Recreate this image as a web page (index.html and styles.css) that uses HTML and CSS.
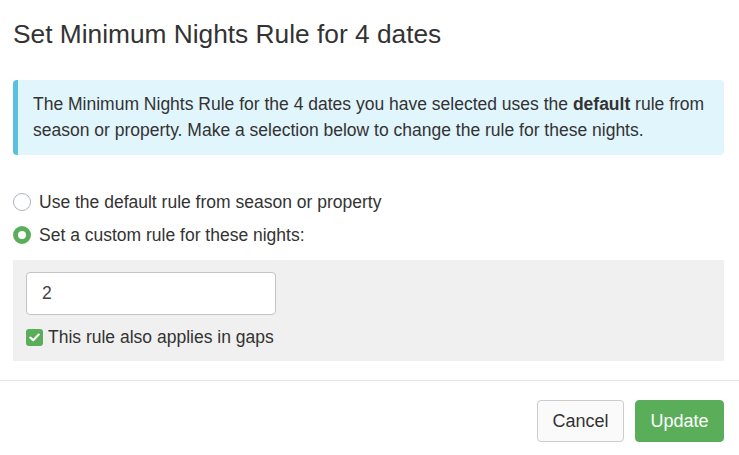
FILE: index.html
```html
<!DOCTYPE html>
<html lang="en">
<head>
<meta charset="utf-8">
<title>Set Minimum Nights Rule</title>
<link rel="stylesheet" href="styles.css">
</head>
<body>
<div class="modal">
  <div class="modal-header">
    <h4 class="modal-title">Set Minimum Nights Rule for 4 dates</h4>
  </div>
  <div class="modal-body">
    <div class="alert">
      The Minimum Nights Rule for the 4 dates you have selected uses the <b>default</b> rule from season or property. Make a selection below to change the rule for these nights.
    </div>
    <div class="options">
      <label class="radio-row">
        <span class="radio"></span>
        <span>Use the default rule from season or property</span>
      </label>
      <label class="radio-row">
        <span class="radio checked"></span>
        <span>Set a custom rule for these nights:</span>
      </label>
    </div>
    <div class="custom-box">
      <div class="input">2</div>
      <label class="check-row">
        <span class="checkbox">
          <svg width="11" height="9" viewBox="0 0 11 9"><path d="M1.3 4.6 L4.2 7.3 L9.7 1.6" fill="none" stroke="#fff" stroke-width="2.1" stroke-linecap="round" stroke-linejoin="round"/></svg>
        </span>
        <span>This rule also applies in gaps</span>
      </label>
    </div>
  </div>
  <div class="modal-footer">
    <button class="btn btn-default">Cancel</button>
    <button class="btn btn-success">Update</button>
  </div>
</div>
</body>
</html>
```

FILE: styles.css
```css
html, body {
  margin: 0;
  padding: 0;
  background: #fff;
}
body {
  font-family: "Liberation Sans", Arial, sans-serif;
  font-size: 17.5px;
  color: #333;
}
.modal {
  width: 739px;
  height: 455px;
  overflow: hidden;
}
.modal-header {
  padding: 19px 15px 0 13px;
  height: 80px;
  box-sizing: border-box;
}
.modal-title {
  margin: 0;
  font-size: 26.3px;
  font-weight: normal;
  line-height: 30px;
  color: #333;
}
.modal-body {
  padding: 0 15px 0 13px;
}
.alert {
  background: #e1f5fd;
  border-left: 5px solid #5bc0de;
  border-radius: 4px;
  padding: 12px 15px;
  line-height: 25.6px;
  height: 75px;
  box-sizing: border-box;
}
.alert b {
  font-weight: bold;
}
.options {
  padding-top: 37px;
  display: flex;
  flex-direction: column;
  gap: 13px;
}
.radio-row {
  display: flex;
  align-items: center;
  gap: 8px;
  height: 20px;
  line-height: 20px;
}
.radio {
  width: 18px;
  height: 18px;
  box-sizing: border-box;
  border: 1px solid #adb5bd;
  border-radius: 50%;
  background: #fff;
  flex: none;
}
.radio.checked {
  border: 5.5px solid #5aae5a;
}
.custom-box {
  margin-top: 15px;
  background: #f0f0f0;
  padding: 12px 13px 15px 13px;
  height: 101px;
  box-sizing: border-box;
}
.input {
  width: 250px;
  height: 43px;
  box-sizing: border-box;
  border: 1px solid #c4c4c4;
  border-radius: 4px;
  background: #fff;
  padding: 0 15px;
  line-height: 41px;
  font-size: 17.5px;
  color: #444;
}
.check-row {
  display: flex;
  align-items: center;
  gap: 5px;
  margin-top: 14px;
  height: 17px;
  line-height: 17px;
}
.checkbox {
  width: 17px;
  height: 17px;
  border-radius: 3px;
  background: #5aae5a;
  display: flex;
  align-items: center;
  justify-content: center;
  flex: none;
}
.modal-footer {
  margin-top: 19px;
  border-top: 1px solid #e5e5e5;
  padding: 19px 15px 0 15px;
  display: flex;
  justify-content: flex-end;
  gap: 11px;
}
.btn {
  font-family: "Liberation Sans", Arial, sans-serif;
  font-size: 18px;
  height: 42px;
  box-sizing: border-box;
  padding: 0 14.5px;
  border-radius: 4px;
  line-height: 40px;
  cursor: pointer;
}
.btn-default {
  background: #fafafa;
  border: 1px solid #ccc;
  color: #333;
}
.btn-success {
  background: #5aae5a;
  border: 1px solid #5aae5a;
  color: #fff;
}
```
